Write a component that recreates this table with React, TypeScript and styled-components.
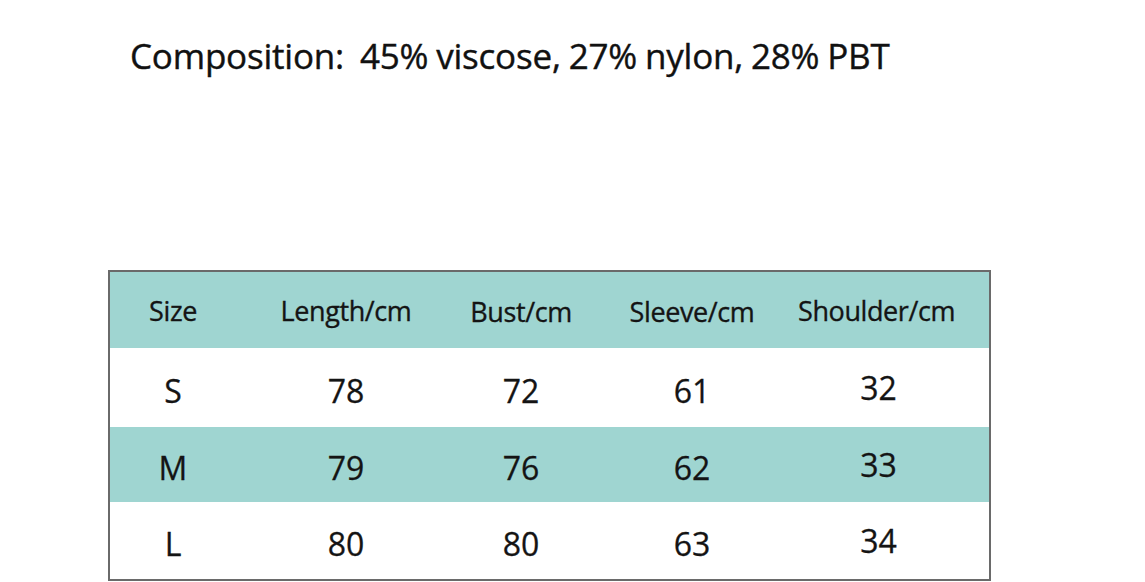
import React from "react"
import styled, { createGlobalStyle } from "styled-components"

const columns = [
  { label: "Size", drop: 0 },
  { label: "Length/cm", drop: 0 },
  { label: "Bust/cm", drop: 3 },
  { label: "Sleeve/cm", drop: 3 },
  { label: "Shoulder/cm", drop: 0 },
]

const rows = [
  { size: "S", values: ["78", "72", "61", "32"], shaded: false, height: 79 },
  { size: "M", values: ["79", "76", "62", "33"], shaded: true, height: 75 },
  { size: "L", values: ["80", "80", "63", "34"], shaded: false, height: 77 },
]

const App: React.FC = () => {
  return (
    <Page>
      <GlobalStyle />
      <Title>Composition:&nbsp; 45% viscose, 27% nylon, 28% PBT</Title>
      <Table>
        <Row $shaded $height={76}>
          {columns.map((col) => (
            <HeadCell key={col.label} $drop={col.drop}>
              {col.label}
            </HeadCell>
          ))}
        </Row>
        {rows.map((row) => (
          <Row key={row.size} $shaded={row.shaded} $height={row.height}>
            <Cell>{row.size}</Cell>
            {row.values.map((v, i) => (
              <Cell key={i}>{v}</Cell>
            ))}
          </Row>
        ))}
      </Table>
    </Page>
  )
}

const GlobalStyle = createGlobalStyle`
  body {
    margin: 0;
    background: #ffffff;
    font-family: "Open Sans", "Noto Sans", sans-serif;
    color: #151515;
  }
`

const Page = styled.div`
  width: 1145px;
  height: 582px;
  padding: 31px 0 0 108px;
  box-sizing: border-box;
  overflow: hidden;
`

const Title = styled.h1`
  margin: 0 0 0 22px;
  font-size: 35px;
  font-weight: 400;
  line-height: 50px;
  letter-spacing: -0.2px;
  word-spacing: -1px;
  color: #111;
  -webkit-text-stroke: 0.4px #111;
`

const Table = styled.div`
  margin-top: 189px;
  width: 883px;
  border: 2px solid #6a6a6a;
  box-sizing: border-box;
`

const Row = styled.div<{ $shaded?: boolean; $height: number }>`
  display: grid;
  grid-template-columns: 126px 220px 130px 212px 1fr;
  height: ${(p) => p.$height}px;
  background: ${(p) => (p.$shaded ? "#9fd5d1" : "#ffffff")};
`

const HeadCell = styled.div<{ $drop: number }>`
  display: flex;
  align-items: center;
  justify-content: center;
  padding-top: ${(p) => p.$drop}px;
  font-size: 27px;
  letter-spacing: -0.4px;
  color: #141414;
  -webkit-text-stroke: 0.35px #141414;

  &:last-child {
    padding-right: 38px;
  }
`

const Cell = styled.div`
  display: flex;
  align-items: center;
  justify-content: center;
  padding-top: 6px;
  font-size: 32px;
  color: #141414;
  -webkit-text-stroke: 0.3px #141414;

  &:last-child {
    padding-right: 30px;
    padding-top: 0;
  }
`

export default App
